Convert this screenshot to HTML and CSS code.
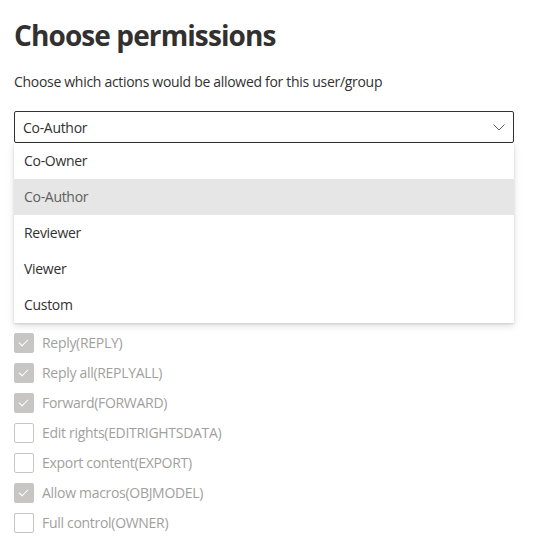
FILE: index.html
```html
<!DOCTYPE html>
<html lang="en">
<head>
<meta charset="utf-8">
<title>Choose permissions</title>
<link rel="stylesheet" href="styles.css">
</head>
<body>
<div class="page">
  <h1 class="title">Choose permissions</h1>
  <p class="subtitle">Choose which actions would be allowed for this user/group</p>
  <div class="dropdown">
    <div class="dropdown-box">
      <span class="dropdown-value">Co-Author</span>
      <svg class="chevron" width="12" height="7" viewBox="0 0 12 7"><path d="M0.5 0.5 L6 6 L11.5 0.5" fill="none" stroke="#605e5c" stroke-width="1"/></svg>
    </div>
    <ul class="menu">
      <li class="menu-item">Co-Owner</li>
      <li class="menu-item selected">Co-Author</li>
      <li class="menu-item">Reviewer</li>
      <li class="menu-item">Viewer</li>
      <li class="menu-item">Custom</li>
    </ul>
  </div>
  <ul class="checks">
    <li class="check-row"><span class="box checked"></span><span class="label">Reply(REPLY)</span></li>
    <li class="check-row"><span class="box checked"></span><span class="label">Reply all(REPLYALL)</span></li>
    <li class="check-row"><span class="box checked"></span><span class="label">Forward(FORWARD)</span></li>
    <li class="check-row"><span class="box"></span><span class="label">Edit rights(EDITRIGHTSDATA)</span></li>
    <li class="check-row"><span class="box"></span><span class="label">Export content(EXPORT)</span></li>
    <li class="check-row"><span class="box checked"></span><span class="label">Allow macros(OBJMODEL)</span></li>
    <li class="check-row"><span class="box"></span><span class="label">Full control(OWNER)</span></li>
  </ul>
</div>
</body>
</html>
```

FILE: styles.css
```css
html, body {
  margin: 0;
  padding: 0;
  background: #ffffff;
}
body {
  font-family: "Open Sans", "Noto Sans", sans-serif;
  color: #323130;
}
.page {
  width: 500px;
  padding: 15px 0 0 14px;
}
.title {
  margin: 0;
  font-size: 28px;
  line-height: 40px;
  font-weight: 700;
  letter-spacing: -0.9px;
  color: #323130;
}
.subtitle {
  margin: 17px 0 0;
  font-size: 14px;
  line-height: 20px;
  letter-spacing: -0.3px;
}
.dropdown {
  margin-top: 19px;
}
.dropdown-box {
  height: 32px;
  box-sizing: border-box;
  border: 1px solid #323130;
  border-radius: 2px;
  display: flex;
  align-items: center;
  justify-content: space-between;
  padding: 0 8px 0 8px;
  font-size: 14px;
  letter-spacing: -0.3px;
}
.chevron {
  display: block;
}
.menu {
  margin: 0;
  padding: 0;
  list-style: none;
  background: #ffffff;
  box-shadow: 0 3.2px 7.2px rgba(0,0,0,0.132), 0 0.6px 1.8px rgba(0,0,0,0.108);
}
.menu-item {
  height: 36px;
  box-sizing: border-box;
  display: flex;
  align-items: center;
  padding: 0 0 2px 10px;
  font-size: 14px;
  letter-spacing: -0.3px;
  color: #323130;
}
.menu-item.selected {
  background: #e6e6e6;
  color: #605e5c;
}
.checks {
  list-style: none;
  margin: 10px 0 0;
  padding: 0;
  display: flex;
  flex-direction: column;
  gap: 10px;
}
.check-row {
  display: flex;
  align-items: center;
  gap: 8px;
  height: 20px;
  font-size: 14px;
  letter-spacing: -0.3px;
  color: #a19f9d;
}
.label {
  padding-bottom: 2px;
}
.box {
  width: 20px;
  height: 20px;
  box-sizing: border-box;
  border: 1px solid #c8c6c4;
  border-radius: 2px;
  position: relative;
  flex: none;
}
.box.checked {
  background: #c8c6c4;
}
.box.checked::after {
  content: "";
  position: absolute;
  left: 6px;
  top: 3px;
  width: 4px;
  height: 8px;
  border-right: 1px solid #ffffff;
  border-bottom: 1px solid #ffffff;
  transform: rotate(45deg);
}
```
